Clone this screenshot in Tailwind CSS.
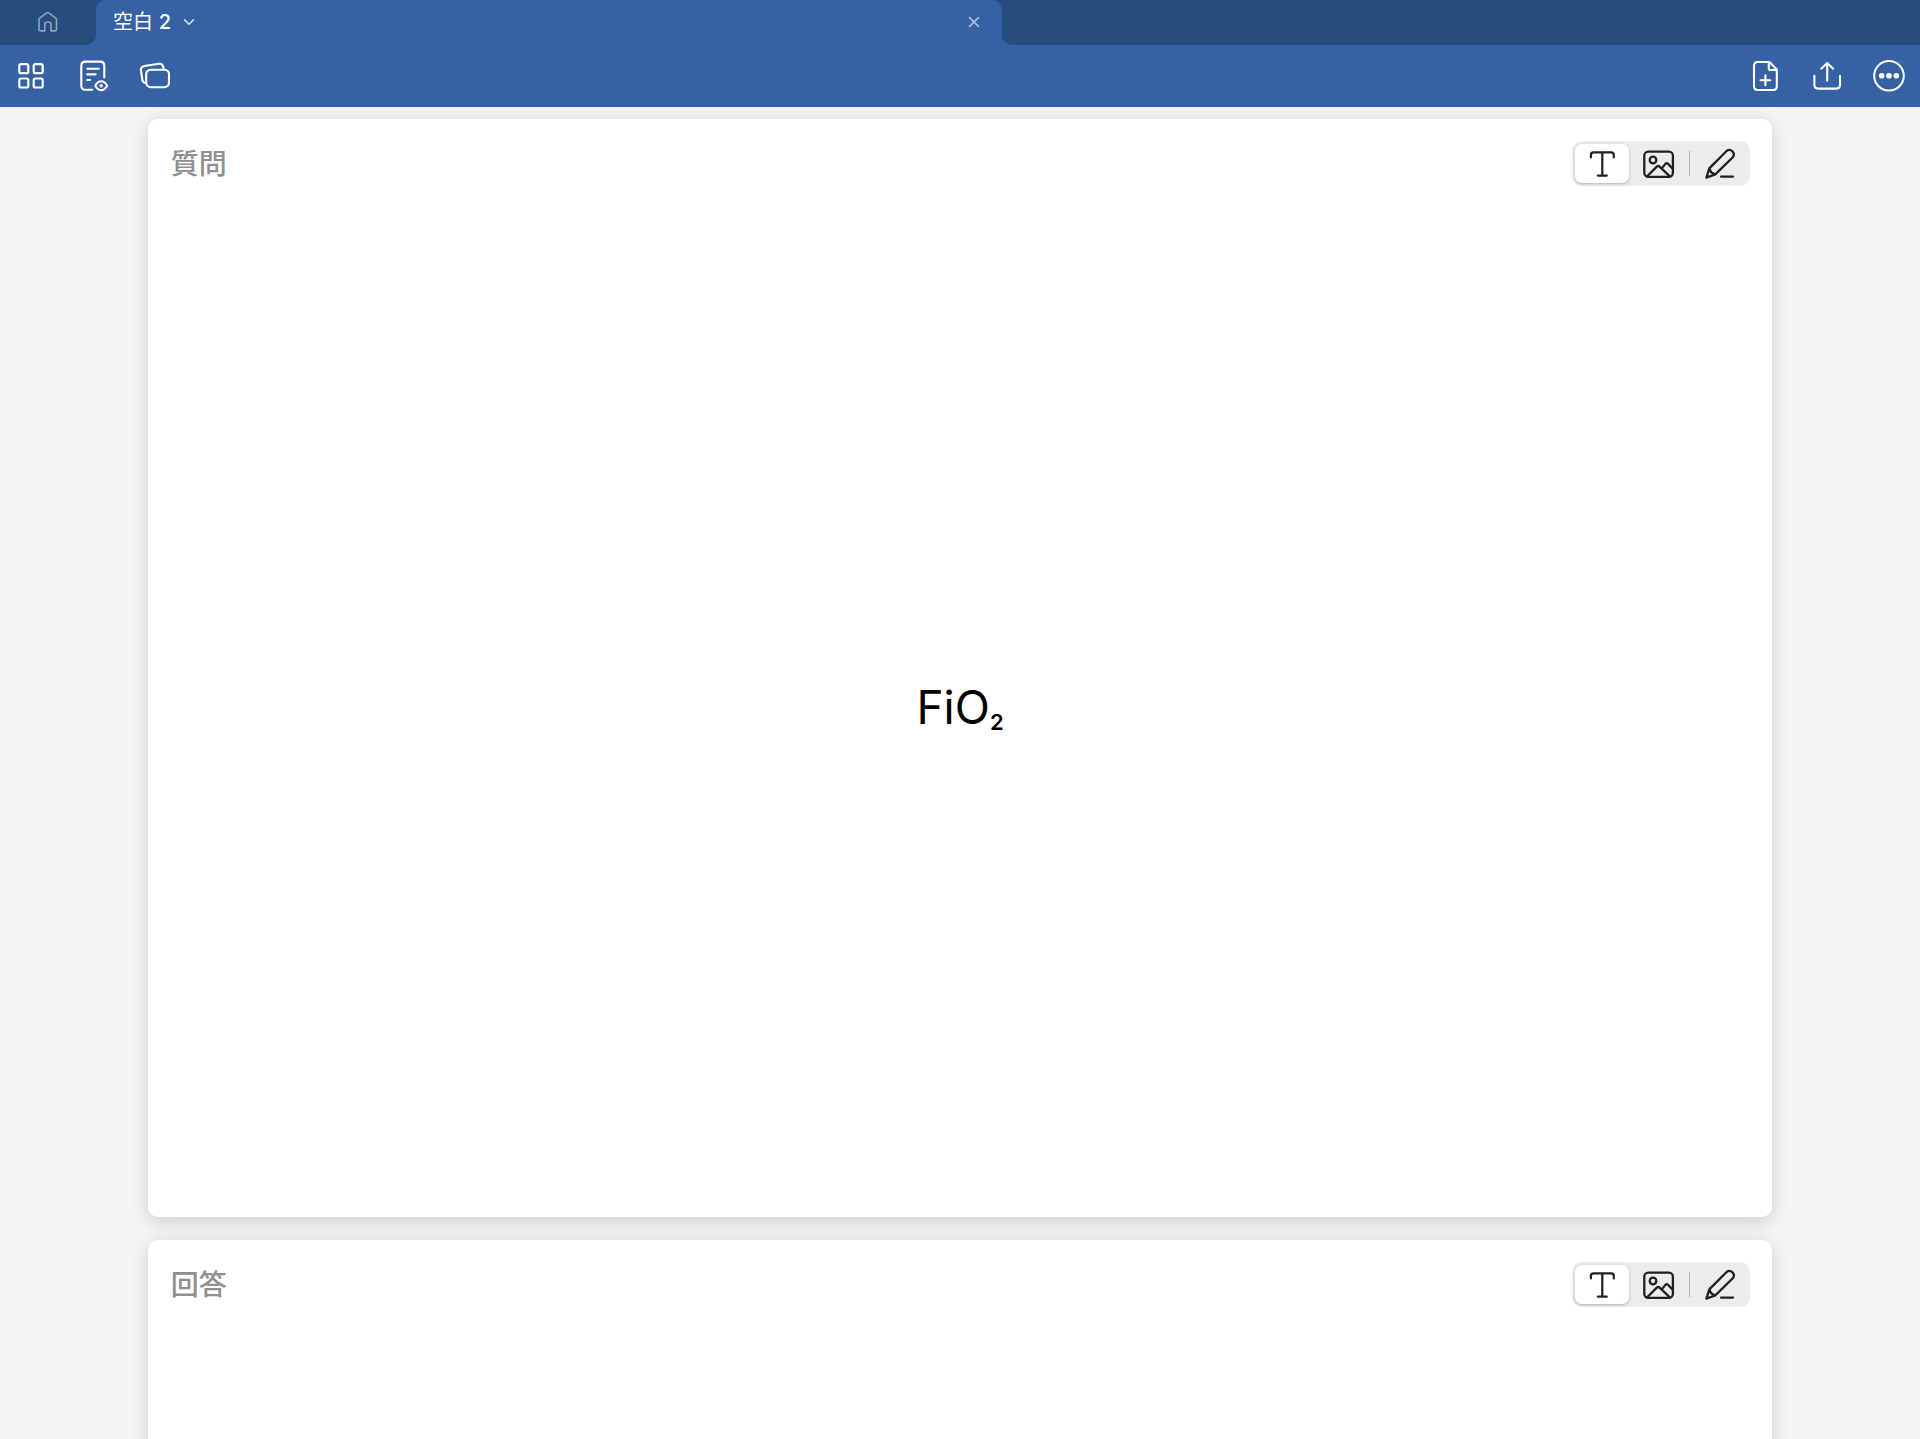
<!DOCTYPE html>
<html lang="ja">
<head>
    <meta charset="UTF-8" />
    <meta name="viewport" content="width=device-width, initial-scale=1" />
    <title>空白 2</title>
    <script src="https://cdn.jsdelivr.net/npm/@tailwindcss/browser@4"></script>
</head>
<body class="h-screen flex flex-col overflow-hidden bg-[#f4f4f4] font-[Inter,'Noto_Sans_CJK_JP',sans-serif]">

    <header class="shrink-0 bg-[#3562a4] text-white">
        <!-- Tabs -->
        <nav class="flex h-[45px]">
            <a href="#" aria-label="ホーム" class="flex w-24 items-center justify-center rounded-br-[10px] bg-[#274c7e] pb-px text-[#8fa5c4]">
                <svg class="size-6" viewBox="0 0 24 24" fill="none" stroke="currentColor" stroke-width="1.6" stroke-linejoin="round">
                    <path d="M3 9.6 Q3 8.8 3.7 8.2 L10.7 2.9 Q11.7 2.1 12.7 2.9 L19.8 8.2 Q20.5 8.8 20.5 9.6 V19.4 Q20.5 20.9 19 20.9 H15 V14.2 Q15 12.2 13 12.2 H10.8 Q8.8 12.2 8.8 14.2 V20.9 H4.5 Q3 20.9 3 19.4 Z" />
                </svg>
            </a>
            <div class="w-[47.2%] bg-[#274c7e]">
                <div class="flex h-full items-center justify-between rounded-t-[10px] bg-[#3562a4] pb-px pl-[17px] pr-5">
                    <button class="flex items-center gap-3 text-xl">
                        <span>空白 <span class="font-medium">2</span></span>
                        <svg class="size-3" viewBox="0 0 12 12" fill="none" stroke="#dfe6f1" stroke-width="1.6" stroke-linecap="round" stroke-linejoin="round">
                            <path d="M1.5 3.8 L6 8.2 L10.5 3.8" />
                        </svg>
                    </button>
                    <button aria-label="閉じる" class="p-0.5 text-[#b4c4e2]">
                        <svg class="size-3" viewBox="0 0 12 12" fill="none" stroke="currentColor" stroke-width="1.6" stroke-linecap="round">
                            <path d="M1.5 1.5 L10.5 10.5 M10.5 1.5 L1.5 10.5" />
                        </svg>
                    </button>
                </div>
            </div>
            <div class="flex-1 rounded-bl-[10px] bg-[#274c7e]"></div>
        </nav>

        <!-- Toolbar -->
        <div class="flex h-[62px] justify-between">
            <div class="flex">
                <button aria-label="サムネイル" class="flex w-[62px] items-center justify-center">
                    <svg class="size-10" viewBox="0 0 40 40" fill="none" stroke="currentColor" stroke-width="2.2">
                        <rect x="8.3" y="8.2" width="9" height="9" rx="1.8" />
                        <rect x="22.7" y="8.2" width="9" height="9" rx="1.8" />
                        <rect x="8.3" y="22.5" width="9" height="9" rx="1.8" />
                        <rect x="22.7" y="22.5" width="9" height="9" rx="1.8" />
                    </svg>
                </button>
                <button aria-label="閲覧モード" class="flex w-[62px] items-center justify-center">
                    <svg class="size-10" viewBox="0 0 40 40" fill="none" stroke="currentColor" stroke-width="2.1" stroke-linecap="round" stroke-linejoin="round">
                        <path d="M31.3 21.5 V10 Q31.3 5.6 27 5.6 H12.7 Q8.3 5.6 8.3 10 V29.4 Q8.3 33.8 12.7 33.8 H19.2" />
                        <path d="M14.3 12.8 H25.8 M14.3 18.4 H22.6 M14.3 24 H17.2" />
                        <path d="M22.2 29.7 Q24.7 25.3 28.2 25.3 Q31.7 25.3 34.2 29.7 Q31.7 34.1 28.2 34.1 Q24.7 34.1 22.2 29.7 Z" />
                        <circle cx="28.2" cy="29.7" r="1.7" fill="currentColor" stroke="none" />
                    </svg>
                </button>
                <button aria-label="フラッシュカード" class="flex w-[62px] items-center justify-center">
                    <svg class="size-10" viewBox="0 0 40 40" fill="none" stroke="currentColor" stroke-width="2.1" stroke-linecap="round" stroke-linejoin="round">
                        <rect x="11.2" y="13.7" width="22.8" height="17.5" rx="4.6" />
                        <path d="M28.6 13 L28.1 10.6 Q27.3 7.3 24 7.8 L9.4 10 Q5.5 10.8 6 14.5 L7.3 23.6 Q7.8 26.6 10.6 27" />
                    </svg>
                </button>
            </div>
            <div class="flex">
                <button aria-label="ページを追加" class="flex w-[62px] items-center justify-center">
                    <svg class="size-10" viewBox="0 0 40 40" fill="none" stroke="currentColor" stroke-width="2.1" stroke-linecap="round" stroke-linejoin="round">
                        <path d="M24.4 6 H12.8 Q9 6 9 9.8 V30.2 Q9 34 12.8 34 H28 Q31.8 34 31.8 30.2 V13.6 Z" />
                        <path d="M23.8 6.3 V12.4 Q23.8 14 25.4 14 H31.5" />
                        <path d="M20.4 19.4 V29.2 M15.5 24.3 H25.3" />
                    </svg>
                </button>
                <button aria-label="共有" class="flex w-[62px] items-center justify-center">
                    <svg class="size-10" viewBox="0 0 40 40" fill="none" stroke="currentColor" stroke-width="2.1" stroke-linecap="round" stroke-linejoin="round">
                        <path d="M20.2 24.8 V7 M14.2 12.7 L20.2 6.9 L26.2 12.7" />
                        <path d="M7.4 19.8 V28.8 Q7.4 32.6 11.2 32.6 H29.2 Q33 32.6 33 28.8 V19.8" />
                    </svg>
                </button>
                <button aria-label="その他" class="flex w-[62px] items-center justify-center">
                    <svg class="size-10" viewBox="0 0 40 40" fill="none" stroke="currentColor" stroke-width="2">
                        <circle cx="20" cy="19.8" r="14.8" />
                        <g fill="currentColor" stroke="none">
                            <circle cx="12.7" cy="19.8" r="2.8" />
                            <circle cx="20" cy="19.8" r="2.8" />
                            <circle cx="27.3" cy="19.8" r="2.8" />
                        </g>
                    </svg>
                </button>
            </div>
        </div>
    </header>

    <!-- Shared glyphs for the card tools -->
    <svg class="hidden">
        <symbol id="icon-text" viewBox="0 0 36 36">
            <path d="M6.9 11.4 V9 Q6.9 6.4 9.5 6.4 H27.2 Q29.8 6.4 29.8 9 V11.4 M18.3 6.4 V29.6 M13.9 29.6 H22.8" />
        </symbol>
        <symbol id="icon-image" viewBox="0 0 36 36">
            <rect x="3.3" y="5.6" width="28.6" height="25.2" rx="4" />
            <circle cx="12" cy="14" r="3.3" />
            <path d="M6.2 30.2 L15.8 20.6 Q17.2 19.3 18.6 20.6 L28.6 30.2 M20.8 22.4 L24.4 17.9 Q25.7 16.6 27 17.8 L31.6 22.6" />
        </symbol>
        <symbol id="icon-pen" viewBox="0 0 36 36">
            <path d="M4.4 31.6 L7.3 22.4 L24.6 5 Q27.6 2.6 30.4 5.3 Q33.2 8.2 30.8 11.2 L13.3 28.4 Z M7.3 22.4 L9.1 26.2 L13.3 28.4 M19 30.6 H31" />
        </symbol>
    </svg>

    <main class="flex flex-1 flex-col gap-[23px] overflow-hidden px-[7.7%] pt-3">
        <section class="flex aspect-[1624/1098] shrink-0 flex-col rounded-[10px] bg-white shadow-[0_4px_18px_rgba(0,0,0,0.16)]">
            <div class="flex items-center justify-between pt-[22px] pr-[22px] pl-[23px]">
                <h2 class="pt-0.5 text-[28px] leading-[43px] font-medium text-[#909090]">質問</h2>
                <div class="flex items-center gap-[3px] rounded-[10px] bg-[#ececec] p-[3px] text-[#231f20]">
                    <button aria-label="テキスト" class="flex h-[39px] w-[54px] items-center justify-center rounded-[7px] bg-white shadow-[0_1px_3px_rgba(0,0,0,0.25)]">
                        <svg class="size-9" fill="none" stroke="currentColor" stroke-width="2.2" stroke-linecap="round" stroke-linejoin="round"><use href="#icon-text" /></svg>
                    </button>
                    <button aria-label="画像" class="flex h-[39px] w-[54px] items-center justify-center">
                        <svg class="size-9" fill="none" stroke="currentColor" stroke-width="2.3" stroke-linecap="round" stroke-linejoin="round"><use href="#icon-image" /></svg>
                    </button>
                    <span class="h-[25px] w-px bg-[#b4b4b4]"></span>
                    <button aria-label="手書き" class="flex h-[39px] w-[54px] items-center justify-center">
                        <svg class="size-9" fill="none" stroke="currentColor" stroke-width="2.3" stroke-linecap="round" stroke-linejoin="round"><use href="#icon-pen" /></svg>
                    </button>
                </div>
            </div>
            <div class="flex flex-1 items-center justify-center pt-3">
                <p class="text-[46px] text-black">FiO<sub class="text-[22px] font-semibold">2</sub></p>
            </div>
        </section>

        <section class="flex aspect-[1624/1098] shrink-0 flex-col rounded-[10px] bg-white shadow-[0_4px_18px_rgba(0,0,0,0.16)]">
            <div class="flex items-center justify-between pt-[22px] pr-[22px] pl-[23px]">
                <h2 class="pt-0.5 text-[28px] leading-[43px] font-medium text-[#909090]">回答</h2>
                <div class="flex items-center gap-[3px] rounded-[10px] bg-[#ececec] p-[3px] text-[#231f20]">
                    <button aria-label="テキスト" class="flex h-[39px] w-[54px] items-center justify-center rounded-[7px] bg-white shadow-[0_1px_3px_rgba(0,0,0,0.25)]">
                        <svg class="size-9" fill="none" stroke="currentColor" stroke-width="2.2" stroke-linecap="round" stroke-linejoin="round"><use href="#icon-text" /></svg>
                    </button>
                    <button aria-label="画像" class="flex h-[39px] w-[54px] items-center justify-center">
                        <svg class="size-9" fill="none" stroke="currentColor" stroke-width="2.3" stroke-linecap="round" stroke-linejoin="round"><use href="#icon-image" /></svg>
                    </button>
                    <span class="h-[25px] w-px bg-[#b4b4b4]"></span>
                    <button aria-label="手書き" class="flex h-[39px] w-[54px] items-center justify-center">
                        <svg class="size-9" fill="none" stroke="currentColor" stroke-width="2.3" stroke-linecap="round" stroke-linejoin="round"><use href="#icon-pen" /></svg>
                    </button>
                </div>
            </div>
        </section>
    </main>

</body>
</html>
